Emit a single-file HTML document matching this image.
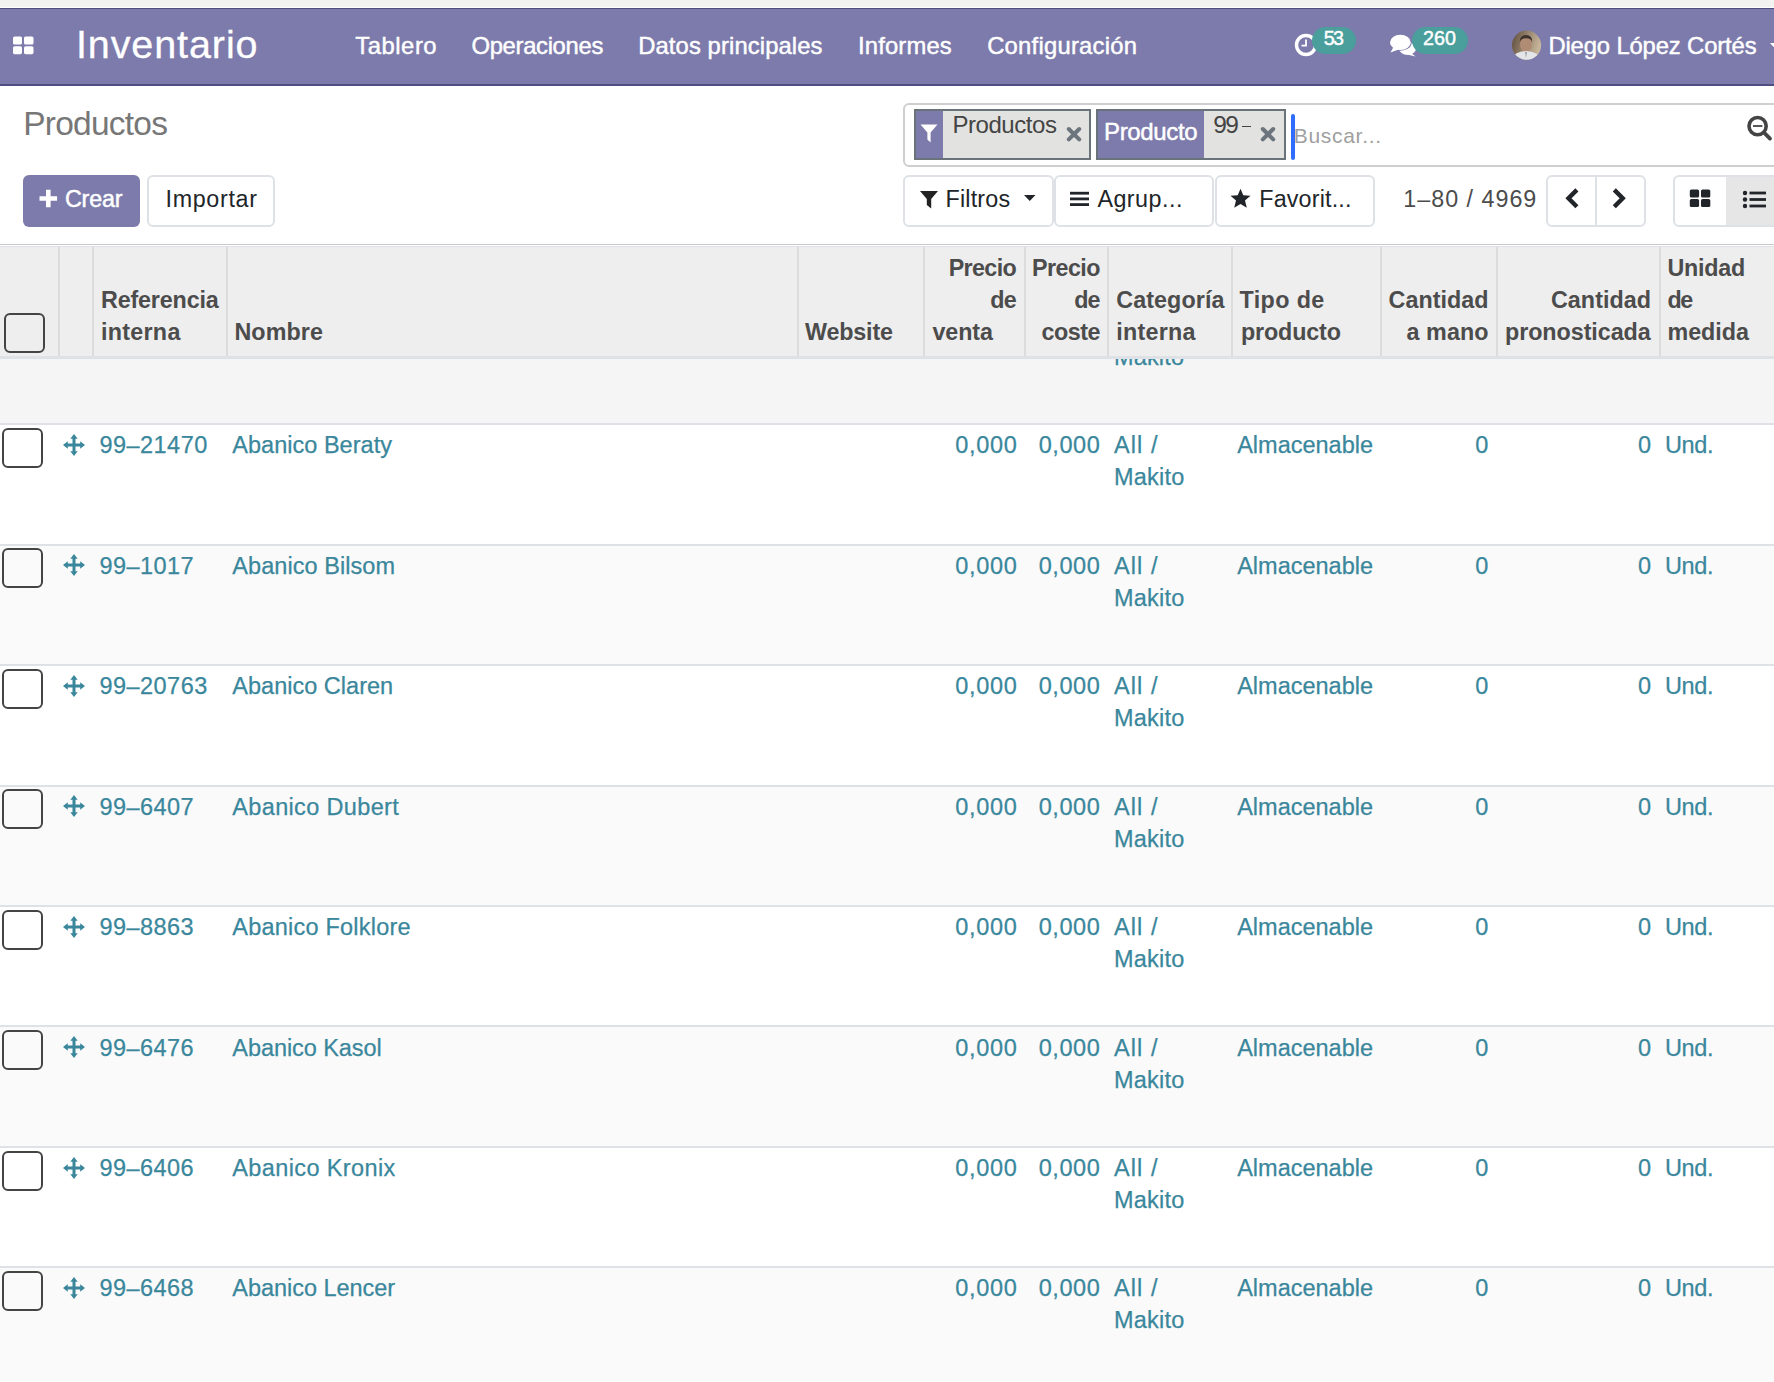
<!DOCTYPE html>
<html><head><meta charset="utf-8"><style>
html,body{margin:0;padding:0;width:1774px;height:1382px;overflow:hidden;background:#fff;position:relative}
.t{position:absolute;white-space:nowrap;font-family:"Liberation Sans",sans-serif}
svg{display:block}
</style></head><body>
<div style="position:absolute;left:0px;top:0px;width:1774px;height:7px;background:#f2f2f0"></div>
<div style="position:absolute;left:0px;top:8px;width:1774px;height:78px;background:#7d7bab;border-top:1px solid #4f4e82;border-bottom:2px solid #4f4e82;box-sizing:border-box"></div>
<svg style="position:absolute;left:13px;top:36px" width="21" height="19" viewBox="0 0 21 19"><rect x="0" y="0.5" width="9" height="8" rx="1.6" fill="#fff"/><rect x="11" y="0.5" width="9.5" height="8" rx="1.6" fill="#fff"/><rect x="0" y="10.2" width="9" height="8" rx="1.6" fill="#fff"/><rect x="11" y="10.2" width="9.5" height="8" rx="1.6" fill="#fff"/></svg>
<div class="t" style="left:75.90px;top:24.80px;font-size:39.5px;line-height:39.5px;color:#fff;font-weight:400;letter-spacing:0.911px;-webkit-text-stroke:0.3px #fff">Inventario</div>
<div class="t" style="left:355.30px;top:34.10px;font-size:23.8px;line-height:23.8px;color:#fff;font-weight:400;letter-spacing:0.539px;-webkit-text-stroke:0.45px #fff">Tablero</div>
<div class="t" style="left:471.50px;top:34.10px;font-size:23.8px;line-height:23.8px;color:#fff;font-weight:400;letter-spacing:-0.315px;-webkit-text-stroke:0.45px #fff">Operaciones</div>
<div class="t" style="left:638.20px;top:34.10px;font-size:23.8px;line-height:23.8px;color:#fff;font-weight:400;letter-spacing:0.110px;-webkit-text-stroke:0.45px #fff">Datos principales</div>
<div class="t" style="left:858.00px;top:34.10px;font-size:23.8px;line-height:23.8px;color:#fff;font-weight:400;letter-spacing:0.160px;-webkit-text-stroke:0.45px #fff">Informes</div>
<div class="t" style="left:987.20px;top:34.10px;font-size:23.8px;line-height:23.8px;color:#fff;font-weight:400;letter-spacing:0.246px;-webkit-text-stroke:0.45px #fff">Configuración</div>
<svg style="position:absolute;left:1293px;top:31.8px" width="26" height="26" viewBox="0 0 26 26"><circle cx="13" cy="13" r="9.5" fill="none" stroke="#fff" stroke-width="3.4"/><path d="M13 7.5 V13.6 H8.5" fill="none" stroke="#fff" stroke-width="1.8"/></svg>
<div style="position:absolute;left:1312px;top:27px;width:44px;height:27px;background:#4a9e9c;border-radius:14px"></div>
<div class="t" style="left:1323.70px;top:28.90px;font-size:19.7px;line-height:19.7px;color:#fff;font-weight:400;letter-spacing:-1.567px;-webkit-text-stroke:0.45px #fff">53</div>
<svg style="position:absolute;left:1388px;top:32px" width="30" height="26" viewBox="0 0 30 26"><ellipse cx="19.5" cy="16.5" rx="8.5" ry="6.3" fill="#fff"/><path d="M22 20 L27.5 24.5 L17 22 Z" fill="#fff"/><ellipse cx="12.4" cy="10.4" rx="11.2" ry="8.4" fill="#7d7bab"/><ellipse cx="12.4" cy="10.4" rx="10.4" ry="7.6" fill="#fff"/><path d="M5.5 15 L2.5 20.5 L11.5 17.2Z" fill="#fff"/></svg>
<div style="position:absolute;left:1412px;top:27px;width:56px;height:27px;background:#4a9e9c;border-radius:14px"></div>
<div class="t" style="left:1423.00px;top:28.90px;font-size:19.7px;line-height:19.7px;color:#fff;font-weight:400;letter-spacing:0.051px;-webkit-text-stroke:0.45px #fff">260</div>
<svg style="position:absolute;left:1511px;top:30px" width="31" height="31" viewBox="0 0 31 31"><defs><clipPath id="avc"><circle cx="15.5" cy="15.2" r="14.6"/></clipPath><linearGradient id="av" x1="0" y1="0" x2="1" y2="0.3"><stop offset="0" stop-color="#5a4838"/><stop offset="0.45" stop-color="#8c7a66"/><stop offset="1" stop-color="#c9b79c"/></linearGradient></defs><g clip-path="url(#avc)"><rect width="31" height="31" fill="url(#av)"/><ellipse cx="15" cy="14.5" rx="6" ry="7.8" fill="#b18c74"/><path d="M8.8 12.5 Q8.5 5 15 5 Q21.5 5 21.2 12.5 Q20 8.2 15 8.3 Q10 8.2 8.8 12.5Z" fill="#3f332c"/><path d="M0 31 Q2 21.5 15 21 Q28 21.5 31 31Z" fill="#e4e5e8"/><path d="M14.2 22 L15 28 L15.8 22Z" fill="#8a8a90"/></g></svg>
<div class="t" style="left:1548.40px;top:33.90px;font-size:23.8px;line-height:23.8px;color:#fff;font-weight:400;letter-spacing:-0.129px;-webkit-text-stroke:0.45px #fff">Diego López Cortés</div>
<svg style="position:absolute;left:1767px;top:40px" width="10" height="10" viewBox="0 0 10 10"><path d="M3 3 L10 3 L6.5 7Z" fill="#fff"/></svg>
<div class="t" style="left:23.20px;top:107.20px;font-size:33.5px;line-height:33.5px;color:#777;font-weight:400;letter-spacing:-0.752px;">Productos</div>
<div style="position:absolute;left:23px;top:175px;width:117px;height:52px;background:#7d7bab;border-radius:6px"></div>
<svg style="position:absolute;left:39px;top:189px" width="19" height="19" viewBox="0 0 19 19"><path d="M7 0.7h4.6v6.5h6.5v4.6h-6.5v6.5H7v-6.5H0.5V7.2H7z" fill="#fff"/></svg>
<div class="t" style="left:65.00px;top:188.40px;font-size:23.3px;line-height:23.3px;color:#fff;font-weight:400;letter-spacing:-0.213px;-webkit-text-stroke:0.45px #fff">Crear</div>
<div style="position:absolute;left:147px;top:175px;width:128px;height:52px;border:2px solid #dee2e6;border-radius:6px;box-sizing:border-box;background:#fff"></div>
<div class="t" style="left:165.50px;top:188.40px;font-size:23.3px;line-height:23.3px;color:#212529;font-weight:400;letter-spacing:0.672px;">Importar</div>
<div style="position:absolute;left:903px;top:103px;width:880px;height:64px;border:2px solid #cfcfcf;border-radius:6px;box-sizing:border-box;background:#fff"></div>
<div style="position:absolute;left:914px;top:109px;width:177px;height:51px;border:2px solid #6a727a;box-sizing:border-box;background:#e2e2e0"></div>
<div style="position:absolute;left:916px;top:111px;width:27px;height:47px;background:#7d7bab"></div>
<svg style="position:absolute;left:919px;top:123px" width="20" height="21" viewBox="0 0 20 21"><path d="M1.5 1.5 H18.5 L11.6 9.5 V19.5 L8.4 16.5 V9.5 Z" fill="#fff"/></svg>
<div class="t" style="left:952.40px;top:113.10px;font-size:24px;line-height:24px;color:#444;font-weight:400;letter-spacing:-0.440px;">Productos</div>
<svg style="position:absolute;left:1065px;top:126px" width="17" height="16" viewBox="0 0 17 16"><path d="M3.8 3 L14.2 13.4 M14.2 3 L3.8 13.4" stroke="#6c757d" stroke-width="4" stroke-linecap="round"/></svg>
<div style="position:absolute;left:1096px;top:109px;width:190px;height:51px;border:2px solid #6a727a;box-sizing:border-box;background:#e2e2e0"></div>
<div style="position:absolute;left:1098px;top:111px;width:106px;height:47px;background:#7d7bab"></div>
<div class="t" style="left:1104.00px;top:119.60px;font-size:24px;line-height:24px;color:#fff;font-weight:400;letter-spacing:-0.346px;-webkit-text-stroke:0.45px #fff">Producto</div>
<div class="t" style="left:1213.30px;top:113.20px;font-size:24.5px;line-height:24.5px;color:#444;font-weight:400;letter-spacing:-1.695px;">99</div>
<div style="position:absolute;left:1241.5px;top:125.6px;width:9.7px;height:1.8px;background:#444"></div>
<svg style="position:absolute;left:1259px;top:126px" width="17" height="16" viewBox="0 0 17 16"><path d="M3.8 3 L14.2 13.4 M14.2 3 L3.8 13.4" stroke="#6c757d" stroke-width="4" stroke-linecap="round"/></svg>
<div style="position:absolute;left:1291px;top:114px;width:4px;height:46px;background:#2e6dff;border-radius:2px"></div>
<div class="t" style="left:1293.80px;top:125.40px;font-size:21px;line-height:21px;color:#a0a0a0;font-weight:400;letter-spacing:0.689px;">Buscar...</div>
<svg style="position:absolute;left:1745px;top:114px" width="30" height="30" viewBox="0 0 30 30"><circle cx="12.6" cy="12.1" r="8.6" fill="none" stroke="#444" stroke-width="3.6"/><path d="M8 12 H17.4" stroke="#444" stroke-width="1.8"/><path d="M18.8 18.4 L25 24.6" stroke="#444" stroke-width="3.8" stroke-linecap="round"/></svg>
<div style="position:absolute;left:903px;top:175px;width:151px;height:52px;border:2px solid #dee2e6;border-radius:6px;box-sizing:border-box;background:#fff"></div>
<div style="position:absolute;left:1054px;top:175px;width:160px;height:52px;border:2px solid #dee2e6;border-radius:6px;box-sizing:border-box;background:#fff"></div>
<div style="position:absolute;left:1215px;top:175px;width:160px;height:52px;border:2px solid #dee2e6;border-radius:6px;box-sizing:border-box;background:#fff"></div>
<svg style="position:absolute;left:919px;top:190px" width="20" height="19" viewBox="0 0 20 19"><path d="M1 1 H19 L12.2 9 V18.5 L7.8 15 V9 Z" fill="#222"/></svg>
<div class="t" style="left:945.60px;top:187.90px;font-size:23.3px;line-height:23.3px;color:#212529;font-weight:400;letter-spacing:0.171px;">Filtros</div>
<svg style="position:absolute;left:1023px;top:194px" width="14" height="8" viewBox="0 0 14 8"><path d="M1 1 H12.5 L6.75 7 Z" fill="#212529"/></svg>
<svg style="position:absolute;left:1069px;top:191px" width="21" height="16" viewBox="0 0 21 16"><rect x="1" y="0.8" width="19" height="2.8" fill="#212529"/><rect x="1" y="6.5" width="19" height="2.8" fill="#212529"/><rect x="1" y="12.2" width="19" height="2.8" fill="#212529"/></svg>
<div class="t" style="left:1097.40px;top:187.90px;font-size:23.3px;line-height:23.3px;color:#212529;font-weight:400;letter-spacing:0.493px;">Agrup...</div>
<svg style="position:absolute;left:1229px;top:188px" width="23" height="21" viewBox="0 0 23 21"><path d="M11.5 0.8 L14.3 7.2 L21.5 7.8 L16 12.6 L17.8 19.8 L11.5 16 L5.2 19.8 L7 12.6 L1.5 7.8 L8.7 7.2 Z" fill="#212529"/></svg>
<div class="t" style="left:1259.30px;top:188.00px;font-size:23.3px;line-height:23.3px;color:#212529;font-weight:400;letter-spacing:0.163px;">Favorit...</div>
<div class="t" style="left:1403.30px;top:188.00px;font-size:23.3px;line-height:23.3px;color:#4c4c4c;font-weight:400;letter-spacing:0.996px;">1–80 / 4969</div>
<div style="position:absolute;left:1546px;top:175px;width:100px;height:52px;border:2px solid #dee2e6;border-radius:6px;box-sizing:border-box;background:#fff"></div>
<div style="position:absolute;left:1595px;top:177px;width:2px;height:48px;background:#dee2e6"></div>
<svg style="position:absolute;left:1563px;top:187px" width="17" height="22" viewBox="0 0 17 22"><path d="M13.9 2.9 L5.5 11.3 L13.9 19.7" fill="none" stroke="#212529" stroke-width="4.4"/></svg>
<svg style="position:absolute;left:1610px;top:187px" width="17" height="22" viewBox="0 0 17 22"><path d="M4.3 2.9 L12.7 11.3 L4.3 19.7" fill="none" stroke="#212529" stroke-width="4.4"/></svg>
<div style="position:absolute;left:1673px;top:175px;width:120px;height:52px;border:2px solid #dee2e6;border-radius:6px;box-sizing:border-box;background:#fff"></div>
<div style="position:absolute;left:1726px;top:177px;width:60px;height:48px;background:#e6e6e6"></div>
<svg style="position:absolute;left:1689px;top:189px" width="22" height="19" viewBox="0 0 22 19"><rect x="0.8" y="0.5" width="9.3" height="8" rx="1.6" fill="#212529"/><rect x="12" y="0.5" width="9.3" height="8" rx="1.6" fill="#212529"/><rect x="0.8" y="10" width="9.3" height="8" rx="1.6" fill="#212529"/><rect x="12" y="10" width="9.3" height="8" rx="1.6" fill="#212529"/></svg>
<svg style="position:absolute;left:1742px;top:189.5px" width="25" height="19" viewBox="0 0 25 19"><circle cx="3" cy="3" r="2.2" fill="#212529"/><circle cx="3" cy="9.5" r="2.2" fill="#212529"/><circle cx="3" cy="16" r="2.2" fill="#212529"/><rect x="7.5" y="1.6" width="16.5" height="2.8" fill="#212529"/><rect x="7.5" y="8.1" width="16.5" height="2.8" fill="#212529"/><rect x="7.5" y="14.6" width="16.5" height="2.8" fill="#212529"/></svg>
<div style="position:absolute;left:0px;top:244px;width:1774px;height:1px;background:#c8c8c8"></div>
<div style="position:absolute;left:0px;top:358px;width:1774px;height:66px;background:#f5f5f5"></div>
<div class="t" style="left:1114.00px;top:345.97px;font-size:23.5px;line-height:23.5px;color:#3a879c;font-weight:400;letter-spacing:0.159px;-webkit-text-stroke:0.25px #3a879c">Makito</div>
<div style="position:absolute;left:0px;top:424px;width:1774px;height:121px;background:#fff"></div>
<div style="position:absolute;left:0px;top:545px;width:1774px;height:120px;background:#fafafa"></div>
<div style="position:absolute;left:0px;top:665px;width:1774px;height:121px;background:#fff"></div>
<div style="position:absolute;left:0px;top:786px;width:1774px;height:120px;background:#fafafa"></div>
<div style="position:absolute;left:0px;top:906px;width:1774px;height:120px;background:#fff"></div>
<div style="position:absolute;left:0px;top:1026px;width:1774px;height:121px;background:#fafafa"></div>
<div style="position:absolute;left:0px;top:1147px;width:1774px;height:120px;background:#fff"></div>
<div style="position:absolute;left:0px;top:1267px;width:1774px;height:121px;background:#fafafa"></div>
<div style="position:absolute;left:0px;top:423px;width:1774px;height:2px;background:#dee2e6"></div>
<div style="position:absolute;left:0px;top:544px;width:1774px;height:2px;background:#dee2e6"></div>
<div style="position:absolute;left:0px;top:664px;width:1774px;height:2px;background:#dee2e6"></div>
<div style="position:absolute;left:0px;top:785px;width:1774px;height:2px;background:#dee2e6"></div>
<div style="position:absolute;left:0px;top:905px;width:1774px;height:2px;background:#dee2e6"></div>
<div style="position:absolute;left:0px;top:1025px;width:1774px;height:2px;background:#dee2e6"></div>
<div style="position:absolute;left:0px;top:1146px;width:1774px;height:2px;background:#dee2e6"></div>
<div style="position:absolute;left:0px;top:1266px;width:1774px;height:2px;background:#dee2e6"></div>
<div style="position:absolute;left:0px;top:246px;width:1774px;height:1px;background:#dee2e6"></div>
<div style="position:absolute;left:0px;top:247px;width:1774px;height:109px;background:#eeeeee"></div>
<div style="position:absolute;left:0px;top:356px;width:1774px;height:3px;background:#dee2e6"></div>
<div style="position:absolute;left:58px;top:247px;width:2px;height:109px;background:#dcdcdc"></div>
<div style="position:absolute;left:92px;top:247px;width:2px;height:109px;background:#dcdcdc"></div>
<div style="position:absolute;left:226px;top:247px;width:2px;height:109px;background:#dcdcdc"></div>
<div style="position:absolute;left:797px;top:247px;width:2px;height:109px;background:#dcdcdc"></div>
<div style="position:absolute;left:923px;top:247px;width:2px;height:109px;background:#dcdcdc"></div>
<div style="position:absolute;left:1024px;top:247px;width:2px;height:109px;background:#dcdcdc"></div>
<div style="position:absolute;left:1107px;top:247px;width:2px;height:109px;background:#dcdcdc"></div>
<div style="position:absolute;left:1231px;top:247px;width:2px;height:109px;background:#dcdcdc"></div>
<div style="position:absolute;left:1380px;top:247px;width:2px;height:109px;background:#dcdcdc"></div>
<div style="position:absolute;left:1496px;top:247px;width:2px;height:109px;background:#dcdcdc"></div>
<div style="position:absolute;left:1659px;top:247px;width:2px;height:109px;background:#dcdcdc"></div>
<div style="position:absolute;left:4px;top:313px;width:41px;height:40px;border:2px solid #444;border-radius:6px;box-sizing:border-box"></div>
<div class="t" style="left:101.00px;top:288.60px;font-size:23.3px;line-height:23.3px;color:#4c4c4c;font-weight:700;letter-spacing:-0.157px;">Referencia</div>
<div class="t" style="left:101.00px;top:320.70px;font-size:23.3px;line-height:23.3px;color:#4c4c4c;font-weight:700;letter-spacing:0.277px;">interna</div>
<div class="t" style="left:234.40px;top:320.70px;font-size:23.3px;line-height:23.3px;color:#4c4c4c;font-weight:700;letter-spacing:0.105px;">Nombre</div>
<div class="t" style="left:805.00px;top:320.70px;font-size:23.3px;line-height:23.3px;color:#4c4c4c;font-weight:700;letter-spacing:-0.148px;">Website</div>
<div class="t" style="left:948.70px;top:256.50px;font-size:23.3px;line-height:23.3px;color:#4c4c4c;font-weight:700;letter-spacing:-0.636px;">Precio</div>
<div class="t" style="left:990.20px;top:288.60px;font-size:23.3px;line-height:23.3px;color:#4c4c4c;font-weight:700;letter-spacing:-0.645px;">de</div>
<div class="t" style="left:932.40px;top:320.70px;font-size:23.3px;line-height:23.3px;color:#4c4c4c;font-weight:700;letter-spacing:-0.087px;">venta</div>
<div class="t" style="left:1032.00px;top:256.50px;font-size:23.3px;line-height:23.3px;color:#4c4c4c;font-weight:700;letter-spacing:-0.556px;">Precio</div>
<div class="t" style="left:1074.20px;top:288.60px;font-size:23.3px;line-height:23.3px;color:#4c4c4c;font-weight:700;letter-spacing:-0.945px;">de</div>
<div class="t" style="left:1041.60px;top:320.70px;font-size:23.3px;line-height:23.3px;color:#4c4c4c;font-weight:700;letter-spacing:-0.503px;">coste</div>
<div class="t" style="left:1116.30px;top:288.60px;font-size:23.3px;line-height:23.3px;color:#4c4c4c;font-weight:700;letter-spacing:0.082px;">Categoría</div>
<div class="t" style="left:1116.30px;top:320.70px;font-size:23.3px;line-height:23.3px;color:#4c4c4c;font-weight:700;letter-spacing:0.260px;">interna</div>
<div class="t" style="left:1239.50px;top:288.60px;font-size:23.3px;line-height:23.3px;color:#4c4c4c;font-weight:700;letter-spacing:0.389px;">Tipo de</div>
<div class="t" style="left:1240.90px;top:320.70px;font-size:23.3px;line-height:23.3px;color:#4c4c4c;font-weight:700;letter-spacing:-0.129px;">producto</div>
<div class="t" style="left:1388.60px;top:288.60px;font-size:23.3px;line-height:23.3px;color:#4c4c4c;font-weight:700;letter-spacing:0.039px;">Cantidad</div>
<div class="t" style="left:1406.40px;top:320.70px;font-size:23.3px;line-height:23.3px;color:#4c4c4c;font-weight:700;letter-spacing:0.130px;">a mano</div>
<div class="t" style="left:1551.00px;top:288.60px;font-size:23.3px;line-height:23.3px;color:#4c4c4c;font-weight:700;letter-spacing:0.039px;">Cantidad</div>
<div class="t" style="left:1505.00px;top:320.70px;font-size:23.3px;line-height:23.3px;color:#4c4c4c;font-weight:700;letter-spacing:-0.051px;">pronosticada</div>
<div class="t" style="left:1667.40px;top:256.50px;font-size:23.3px;line-height:23.3px;color:#4c4c4c;font-weight:700;letter-spacing:-0.197px;">Unidad</div>
<div class="t" style="left:1667.40px;top:288.60px;font-size:23.3px;line-height:23.3px;color:#4c4c4c;font-weight:700;letter-spacing:-1.345px;">de</div>
<div class="t" style="left:1667.40px;top:320.70px;font-size:23.3px;line-height:23.3px;color:#4c4c4c;font-weight:700;letter-spacing:0.023px;">medida</div>
<div style="position:absolute;left:2px;top:428px;width:41px;height:40px;border:2px solid #444;border-radius:6px;box-sizing:border-box"></div>
<svg style="position:absolute;left:63px;top:434px" width="22" height="22" viewBox="0 0 22 22"><path d="M11 0 L14.7 4.8 H12.5 V9.5 H17.2 V7.3 L22 11 L17.2 14.7 V12.5 H12.5 V17.2 H14.7 L11 22 L7.3 17.2 H9.5 V12.5 H4.8 V14.7 L0 11 L4.8 7.3 V9.5 H9.5 V4.8 H7.3 Z" fill="#3a879c"/></svg>
<div class="t" style="left:99.40px;top:434.40px;font-size:23.5px;line-height:23.5px;color:#3a879c;font-weight:400;letter-spacing:0.475px;-webkit-text-stroke:0.25px #3a879c">99–21470</div>
<div class="t" style="left:232.30px;top:434.40px;font-size:23.5px;line-height:23.5px;color:#3a879c;font-weight:400;letter-spacing:0.021px;-webkit-text-stroke:0.25px #3a879c">Abanico Beraty</div>
<div class="t" style="left:955.30px;top:434.40px;font-size:23.5px;line-height:23.5px;color:#3a879c;font-weight:400;letter-spacing:0.658px;-webkit-text-stroke:0.25px #3a879c">0,000</div>
<div class="t" style="left:1038.70px;top:434.40px;font-size:23.5px;line-height:23.5px;color:#3a879c;font-weight:400;letter-spacing:0.583px;-webkit-text-stroke:0.25px #3a879c">0,000</div>
<div class="t" style="left:1114.00px;top:434.40px;font-size:23.5px;line-height:23.5px;color:#3a879c;font-weight:400;letter-spacing:1.114px;-webkit-text-stroke:0.25px #3a879c">All /</div>
<div class="t" style="left:1114.00px;top:466.40px;font-size:23.5px;line-height:23.5px;color:#3a879c;font-weight:400;letter-spacing:0.239px;-webkit-text-stroke:0.25px #3a879c">Makito</div>
<div class="t" style="left:1237.20px;top:434.40px;font-size:23.5px;line-height:23.5px;color:#3a879c;font-weight:400;letter-spacing:-0.003px;-webkit-text-stroke:0.25px #3a879c">Almacenable</div>
<div class="t" style="left:1475.36px;top:434.40px;font-size:23.5px;line-height:23.5px;color:#3a879c;font-weight:400;letter-spacing:0.000px;-webkit-text-stroke:0.25px #3a879c">0</div>
<div class="t" style="left:1637.96px;top:434.40px;font-size:23.5px;line-height:23.5px;color:#3a879c;font-weight:400;letter-spacing:0.000px;-webkit-text-stroke:0.25px #3a879c">0</div>
<div class="t" style="left:1665.00px;top:434.40px;font-size:23.5px;line-height:23.5px;color:#3a879c;font-weight:400;letter-spacing:-0.395px;-webkit-text-stroke:0.25px #3a879c">Und.</div>
<div style="position:absolute;left:2px;top:548px;width:41px;height:40px;border:2px solid #444;border-radius:6px;box-sizing:border-box"></div>
<svg style="position:absolute;left:63px;top:554px" width="22" height="22" viewBox="0 0 22 22"><path d="M11 0 L14.7 4.8 H12.5 V9.5 H17.2 V7.3 L22 11 L17.2 14.7 V12.5 H12.5 V17.2 H14.7 L11 22 L7.3 17.2 H9.5 V12.5 H4.8 V14.7 L0 11 L4.8 7.3 V9.5 H9.5 V4.8 H7.3 Z" fill="#3a879c"/></svg>
<div class="t" style="left:99.40px;top:554.83px;font-size:23.5px;line-height:23.5px;color:#3a879c;font-weight:400;letter-spacing:0.461px;-webkit-text-stroke:0.25px #3a879c">99–1017</div>
<div class="t" style="left:232.30px;top:554.83px;font-size:23.5px;line-height:23.5px;color:#3a879c;font-weight:400;letter-spacing:0.060px;-webkit-text-stroke:0.25px #3a879c">Abanico Bilsom</div>
<div class="t" style="left:955.30px;top:554.83px;font-size:23.5px;line-height:23.5px;color:#3a879c;font-weight:400;letter-spacing:0.658px;-webkit-text-stroke:0.25px #3a879c">0,000</div>
<div class="t" style="left:1038.70px;top:554.83px;font-size:23.5px;line-height:23.5px;color:#3a879c;font-weight:400;letter-spacing:0.583px;-webkit-text-stroke:0.25px #3a879c">0,000</div>
<div class="t" style="left:1114.00px;top:554.83px;font-size:23.5px;line-height:23.5px;color:#3a879c;font-weight:400;letter-spacing:1.114px;-webkit-text-stroke:0.25px #3a879c">All /</div>
<div class="t" style="left:1114.00px;top:586.83px;font-size:23.5px;line-height:23.5px;color:#3a879c;font-weight:400;letter-spacing:0.239px;-webkit-text-stroke:0.25px #3a879c">Makito</div>
<div class="t" style="left:1237.20px;top:554.83px;font-size:23.5px;line-height:23.5px;color:#3a879c;font-weight:400;letter-spacing:-0.003px;-webkit-text-stroke:0.25px #3a879c">Almacenable</div>
<div class="t" style="left:1475.36px;top:554.83px;font-size:23.5px;line-height:23.5px;color:#3a879c;font-weight:400;letter-spacing:0.000px;-webkit-text-stroke:0.25px #3a879c">0</div>
<div class="t" style="left:1637.96px;top:554.83px;font-size:23.5px;line-height:23.5px;color:#3a879c;font-weight:400;letter-spacing:0.000px;-webkit-text-stroke:0.25px #3a879c">0</div>
<div class="t" style="left:1665.00px;top:554.83px;font-size:23.5px;line-height:23.5px;color:#3a879c;font-weight:400;letter-spacing:-0.395px;-webkit-text-stroke:0.25px #3a879c">Und.</div>
<div style="position:absolute;left:2px;top:669px;width:41px;height:40px;border:2px solid #444;border-radius:6px;box-sizing:border-box"></div>
<svg style="position:absolute;left:63px;top:675px" width="22" height="22" viewBox="0 0 22 22"><path d="M11 0 L14.7 4.8 H12.5 V9.5 H17.2 V7.3 L22 11 L17.2 14.7 V12.5 H12.5 V17.2 H14.7 L11 22 L7.3 17.2 H9.5 V12.5 H4.8 V14.7 L0 11 L4.8 7.3 V9.5 H9.5 V4.8 H7.3 Z" fill="#3a879c"/></svg>
<div class="t" style="left:99.40px;top:675.26px;font-size:23.5px;line-height:23.5px;color:#3a879c;font-weight:400;letter-spacing:0.475px;-webkit-text-stroke:0.25px #3a879c">99–20763</div>
<div class="t" style="left:232.30px;top:675.26px;font-size:23.5px;line-height:23.5px;color:#3a879c;font-weight:400;letter-spacing:0.012px;-webkit-text-stroke:0.25px #3a879c">Abanico Claren</div>
<div class="t" style="left:955.30px;top:675.26px;font-size:23.5px;line-height:23.5px;color:#3a879c;font-weight:400;letter-spacing:0.658px;-webkit-text-stroke:0.25px #3a879c">0,000</div>
<div class="t" style="left:1038.70px;top:675.26px;font-size:23.5px;line-height:23.5px;color:#3a879c;font-weight:400;letter-spacing:0.583px;-webkit-text-stroke:0.25px #3a879c">0,000</div>
<div class="t" style="left:1114.00px;top:675.26px;font-size:23.5px;line-height:23.5px;color:#3a879c;font-weight:400;letter-spacing:1.114px;-webkit-text-stroke:0.25px #3a879c">All /</div>
<div class="t" style="left:1114.00px;top:707.26px;font-size:23.5px;line-height:23.5px;color:#3a879c;font-weight:400;letter-spacing:0.239px;-webkit-text-stroke:0.25px #3a879c">Makito</div>
<div class="t" style="left:1237.20px;top:675.26px;font-size:23.5px;line-height:23.5px;color:#3a879c;font-weight:400;letter-spacing:-0.003px;-webkit-text-stroke:0.25px #3a879c">Almacenable</div>
<div class="t" style="left:1475.36px;top:675.26px;font-size:23.5px;line-height:23.5px;color:#3a879c;font-weight:400;letter-spacing:0.000px;-webkit-text-stroke:0.25px #3a879c">0</div>
<div class="t" style="left:1637.96px;top:675.26px;font-size:23.5px;line-height:23.5px;color:#3a879c;font-weight:400;letter-spacing:0.000px;-webkit-text-stroke:0.25px #3a879c">0</div>
<div class="t" style="left:1665.00px;top:675.26px;font-size:23.5px;line-height:23.5px;color:#3a879c;font-weight:400;letter-spacing:-0.395px;-webkit-text-stroke:0.25px #3a879c">Und.</div>
<div style="position:absolute;left:2px;top:789px;width:41px;height:40px;border:2px solid #444;border-radius:6px;box-sizing:border-box"></div>
<svg style="position:absolute;left:63px;top:795px" width="22" height="22" viewBox="0 0 22 22"><path d="M11 0 L14.7 4.8 H12.5 V9.5 H17.2 V7.3 L22 11 L17.2 14.7 V12.5 H12.5 V17.2 H14.7 L11 22 L7.3 17.2 H9.5 V12.5 H4.8 V14.7 L0 11 L4.8 7.3 V9.5 H9.5 V4.8 H7.3 Z" fill="#3a879c"/></svg>
<div class="t" style="left:99.40px;top:795.69px;font-size:23.5px;line-height:23.5px;color:#3a879c;font-weight:400;letter-spacing:0.461px;-webkit-text-stroke:0.25px #3a879c">99–6407</div>
<div class="t" style="left:232.30px;top:795.69px;font-size:23.5px;line-height:23.5px;color:#3a879c;font-weight:400;letter-spacing:0.344px;-webkit-text-stroke:0.25px #3a879c">Abanico Dubert</div>
<div class="t" style="left:955.30px;top:795.69px;font-size:23.5px;line-height:23.5px;color:#3a879c;font-weight:400;letter-spacing:0.658px;-webkit-text-stroke:0.25px #3a879c">0,000</div>
<div class="t" style="left:1038.70px;top:795.69px;font-size:23.5px;line-height:23.5px;color:#3a879c;font-weight:400;letter-spacing:0.583px;-webkit-text-stroke:0.25px #3a879c">0,000</div>
<div class="t" style="left:1114.00px;top:795.69px;font-size:23.5px;line-height:23.5px;color:#3a879c;font-weight:400;letter-spacing:1.114px;-webkit-text-stroke:0.25px #3a879c">All /</div>
<div class="t" style="left:1114.00px;top:827.69px;font-size:23.5px;line-height:23.5px;color:#3a879c;font-weight:400;letter-spacing:0.239px;-webkit-text-stroke:0.25px #3a879c">Makito</div>
<div class="t" style="left:1237.20px;top:795.69px;font-size:23.5px;line-height:23.5px;color:#3a879c;font-weight:400;letter-spacing:-0.003px;-webkit-text-stroke:0.25px #3a879c">Almacenable</div>
<div class="t" style="left:1475.36px;top:795.69px;font-size:23.5px;line-height:23.5px;color:#3a879c;font-weight:400;letter-spacing:0.000px;-webkit-text-stroke:0.25px #3a879c">0</div>
<div class="t" style="left:1637.96px;top:795.69px;font-size:23.5px;line-height:23.5px;color:#3a879c;font-weight:400;letter-spacing:0.000px;-webkit-text-stroke:0.25px #3a879c">0</div>
<div class="t" style="left:1665.00px;top:795.69px;font-size:23.5px;line-height:23.5px;color:#3a879c;font-weight:400;letter-spacing:-0.395px;-webkit-text-stroke:0.25px #3a879c">Und.</div>
<div style="position:absolute;left:2px;top:910px;width:41px;height:40px;border:2px solid #444;border-radius:6px;box-sizing:border-box"></div>
<svg style="position:absolute;left:63px;top:916px" width="22" height="22" viewBox="0 0 22 22"><path d="M11 0 L14.7 4.8 H12.5 V9.5 H17.2 V7.3 L22 11 L17.2 14.7 V12.5 H12.5 V17.2 H14.7 L11 22 L7.3 17.2 H9.5 V12.5 H4.8 V14.7 L0 11 L4.8 7.3 V9.5 H9.5 V4.8 H7.3 Z" fill="#3a879c"/></svg>
<div class="t" style="left:99.40px;top:916.12px;font-size:23.5px;line-height:23.5px;color:#3a879c;font-weight:400;letter-spacing:0.461px;-webkit-text-stroke:0.25px #3a879c">99–8863</div>
<div class="t" style="left:232.30px;top:916.12px;font-size:23.5px;line-height:23.5px;color:#3a879c;font-weight:400;letter-spacing:0.215px;-webkit-text-stroke:0.25px #3a879c">Abanico Folklore</div>
<div class="t" style="left:955.30px;top:916.12px;font-size:23.5px;line-height:23.5px;color:#3a879c;font-weight:400;letter-spacing:0.658px;-webkit-text-stroke:0.25px #3a879c">0,000</div>
<div class="t" style="left:1038.70px;top:916.12px;font-size:23.5px;line-height:23.5px;color:#3a879c;font-weight:400;letter-spacing:0.583px;-webkit-text-stroke:0.25px #3a879c">0,000</div>
<div class="t" style="left:1114.00px;top:916.12px;font-size:23.5px;line-height:23.5px;color:#3a879c;font-weight:400;letter-spacing:1.114px;-webkit-text-stroke:0.25px #3a879c">All /</div>
<div class="t" style="left:1114.00px;top:948.12px;font-size:23.5px;line-height:23.5px;color:#3a879c;font-weight:400;letter-spacing:0.239px;-webkit-text-stroke:0.25px #3a879c">Makito</div>
<div class="t" style="left:1237.20px;top:916.12px;font-size:23.5px;line-height:23.5px;color:#3a879c;font-weight:400;letter-spacing:-0.003px;-webkit-text-stroke:0.25px #3a879c">Almacenable</div>
<div class="t" style="left:1475.36px;top:916.12px;font-size:23.5px;line-height:23.5px;color:#3a879c;font-weight:400;letter-spacing:0.000px;-webkit-text-stroke:0.25px #3a879c">0</div>
<div class="t" style="left:1637.96px;top:916.12px;font-size:23.5px;line-height:23.5px;color:#3a879c;font-weight:400;letter-spacing:0.000px;-webkit-text-stroke:0.25px #3a879c">0</div>
<div class="t" style="left:1665.00px;top:916.12px;font-size:23.5px;line-height:23.5px;color:#3a879c;font-weight:400;letter-spacing:-0.395px;-webkit-text-stroke:0.25px #3a879c">Und.</div>
<div style="position:absolute;left:2px;top:1030px;width:41px;height:40px;border:2px solid #444;border-radius:6px;box-sizing:border-box"></div>
<svg style="position:absolute;left:63px;top:1036px" width="22" height="22" viewBox="0 0 22 22"><path d="M11 0 L14.7 4.8 H12.5 V9.5 H17.2 V7.3 L22 11 L17.2 14.7 V12.5 H12.5 V17.2 H14.7 L11 22 L7.3 17.2 H9.5 V12.5 H4.8 V14.7 L0 11 L4.8 7.3 V9.5 H9.5 V4.8 H7.3 Z" fill="#3a879c"/></svg>
<div class="t" style="left:99.40px;top:1036.55px;font-size:23.5px;line-height:23.5px;color:#3a879c;font-weight:400;letter-spacing:0.461px;-webkit-text-stroke:0.25px #3a879c">99–6476</div>
<div class="t" style="left:232.30px;top:1036.55px;font-size:23.5px;line-height:23.5px;color:#3a879c;font-weight:400;letter-spacing:-0.074px;-webkit-text-stroke:0.25px #3a879c">Abanico Kasol</div>
<div class="t" style="left:955.30px;top:1036.55px;font-size:23.5px;line-height:23.5px;color:#3a879c;font-weight:400;letter-spacing:0.658px;-webkit-text-stroke:0.25px #3a879c">0,000</div>
<div class="t" style="left:1038.70px;top:1036.55px;font-size:23.5px;line-height:23.5px;color:#3a879c;font-weight:400;letter-spacing:0.583px;-webkit-text-stroke:0.25px #3a879c">0,000</div>
<div class="t" style="left:1114.00px;top:1036.55px;font-size:23.5px;line-height:23.5px;color:#3a879c;font-weight:400;letter-spacing:1.114px;-webkit-text-stroke:0.25px #3a879c">All /</div>
<div class="t" style="left:1114.00px;top:1068.55px;font-size:23.5px;line-height:23.5px;color:#3a879c;font-weight:400;letter-spacing:0.239px;-webkit-text-stroke:0.25px #3a879c">Makito</div>
<div class="t" style="left:1237.20px;top:1036.55px;font-size:23.5px;line-height:23.5px;color:#3a879c;font-weight:400;letter-spacing:-0.003px;-webkit-text-stroke:0.25px #3a879c">Almacenable</div>
<div class="t" style="left:1475.36px;top:1036.55px;font-size:23.5px;line-height:23.5px;color:#3a879c;font-weight:400;letter-spacing:0.000px;-webkit-text-stroke:0.25px #3a879c">0</div>
<div class="t" style="left:1637.96px;top:1036.55px;font-size:23.5px;line-height:23.5px;color:#3a879c;font-weight:400;letter-spacing:0.000px;-webkit-text-stroke:0.25px #3a879c">0</div>
<div class="t" style="left:1665.00px;top:1036.55px;font-size:23.5px;line-height:23.5px;color:#3a879c;font-weight:400;letter-spacing:-0.395px;-webkit-text-stroke:0.25px #3a879c">Und.</div>
<div style="position:absolute;left:2px;top:1151px;width:41px;height:40px;border:2px solid #444;border-radius:6px;box-sizing:border-box"></div>
<svg style="position:absolute;left:63px;top:1157px" width="22" height="22" viewBox="0 0 22 22"><path d="M11 0 L14.7 4.8 H12.5 V9.5 H17.2 V7.3 L22 11 L17.2 14.7 V12.5 H12.5 V17.2 H14.7 L11 22 L7.3 17.2 H9.5 V12.5 H4.8 V14.7 L0 11 L4.8 7.3 V9.5 H9.5 V4.8 H7.3 Z" fill="#3a879c"/></svg>
<div class="t" style="left:99.40px;top:1156.98px;font-size:23.5px;line-height:23.5px;color:#3a879c;font-weight:400;letter-spacing:0.461px;-webkit-text-stroke:0.25px #3a879c">99–6406</div>
<div class="t" style="left:232.30px;top:1156.98px;font-size:23.5px;line-height:23.5px;color:#3a879c;font-weight:400;letter-spacing:0.374px;-webkit-text-stroke:0.25px #3a879c">Abanico Kronix</div>
<div class="t" style="left:955.30px;top:1156.98px;font-size:23.5px;line-height:23.5px;color:#3a879c;font-weight:400;letter-spacing:0.658px;-webkit-text-stroke:0.25px #3a879c">0,000</div>
<div class="t" style="left:1038.70px;top:1156.98px;font-size:23.5px;line-height:23.5px;color:#3a879c;font-weight:400;letter-spacing:0.583px;-webkit-text-stroke:0.25px #3a879c">0,000</div>
<div class="t" style="left:1114.00px;top:1156.98px;font-size:23.5px;line-height:23.5px;color:#3a879c;font-weight:400;letter-spacing:1.114px;-webkit-text-stroke:0.25px #3a879c">All /</div>
<div class="t" style="left:1114.00px;top:1188.98px;font-size:23.5px;line-height:23.5px;color:#3a879c;font-weight:400;letter-spacing:0.239px;-webkit-text-stroke:0.25px #3a879c">Makito</div>
<div class="t" style="left:1237.20px;top:1156.98px;font-size:23.5px;line-height:23.5px;color:#3a879c;font-weight:400;letter-spacing:-0.003px;-webkit-text-stroke:0.25px #3a879c">Almacenable</div>
<div class="t" style="left:1475.36px;top:1156.98px;font-size:23.5px;line-height:23.5px;color:#3a879c;font-weight:400;letter-spacing:0.000px;-webkit-text-stroke:0.25px #3a879c">0</div>
<div class="t" style="left:1637.96px;top:1156.98px;font-size:23.5px;line-height:23.5px;color:#3a879c;font-weight:400;letter-spacing:0.000px;-webkit-text-stroke:0.25px #3a879c">0</div>
<div class="t" style="left:1665.00px;top:1156.98px;font-size:23.5px;line-height:23.5px;color:#3a879c;font-weight:400;letter-spacing:-0.395px;-webkit-text-stroke:0.25px #3a879c">Und.</div>
<div style="position:absolute;left:2px;top:1271px;width:41px;height:40px;border:2px solid #444;border-radius:6px;box-sizing:border-box"></div>
<svg style="position:absolute;left:63px;top:1277px" width="22" height="22" viewBox="0 0 22 22"><path d="M11 0 L14.7 4.8 H12.5 V9.5 H17.2 V7.3 L22 11 L17.2 14.7 V12.5 H12.5 V17.2 H14.7 L11 22 L7.3 17.2 H9.5 V12.5 H4.8 V14.7 L0 11 L4.8 7.3 V9.5 H9.5 V4.8 H7.3 Z" fill="#3a879c"/></svg>
<div class="t" style="left:99.40px;top:1277.41px;font-size:23.5px;line-height:23.5px;color:#3a879c;font-weight:400;letter-spacing:0.461px;-webkit-text-stroke:0.25px #3a879c">99–6468</div>
<div class="t" style="left:232.30px;top:1277.41px;font-size:23.5px;line-height:23.5px;color:#3a879c;font-weight:400;letter-spacing:-0.040px;-webkit-text-stroke:0.25px #3a879c">Abanico Lencer</div>
<div class="t" style="left:955.30px;top:1277.41px;font-size:23.5px;line-height:23.5px;color:#3a879c;font-weight:400;letter-spacing:0.658px;-webkit-text-stroke:0.25px #3a879c">0,000</div>
<div class="t" style="left:1038.70px;top:1277.41px;font-size:23.5px;line-height:23.5px;color:#3a879c;font-weight:400;letter-spacing:0.583px;-webkit-text-stroke:0.25px #3a879c">0,000</div>
<div class="t" style="left:1114.00px;top:1277.41px;font-size:23.5px;line-height:23.5px;color:#3a879c;font-weight:400;letter-spacing:1.114px;-webkit-text-stroke:0.25px #3a879c">All /</div>
<div class="t" style="left:1114.00px;top:1309.41px;font-size:23.5px;line-height:23.5px;color:#3a879c;font-weight:400;letter-spacing:0.239px;-webkit-text-stroke:0.25px #3a879c">Makito</div>
<div class="t" style="left:1237.20px;top:1277.41px;font-size:23.5px;line-height:23.5px;color:#3a879c;font-weight:400;letter-spacing:-0.003px;-webkit-text-stroke:0.25px #3a879c">Almacenable</div>
<div class="t" style="left:1475.36px;top:1277.41px;font-size:23.5px;line-height:23.5px;color:#3a879c;font-weight:400;letter-spacing:0.000px;-webkit-text-stroke:0.25px #3a879c">0</div>
<div class="t" style="left:1637.96px;top:1277.41px;font-size:23.5px;line-height:23.5px;color:#3a879c;font-weight:400;letter-spacing:0.000px;-webkit-text-stroke:0.25px #3a879c">0</div>
<div class="t" style="left:1665.00px;top:1277.41px;font-size:23.5px;line-height:23.5px;color:#3a879c;font-weight:400;letter-spacing:-0.395px;-webkit-text-stroke:0.25px #3a879c">Und.</div>
</body></html>
